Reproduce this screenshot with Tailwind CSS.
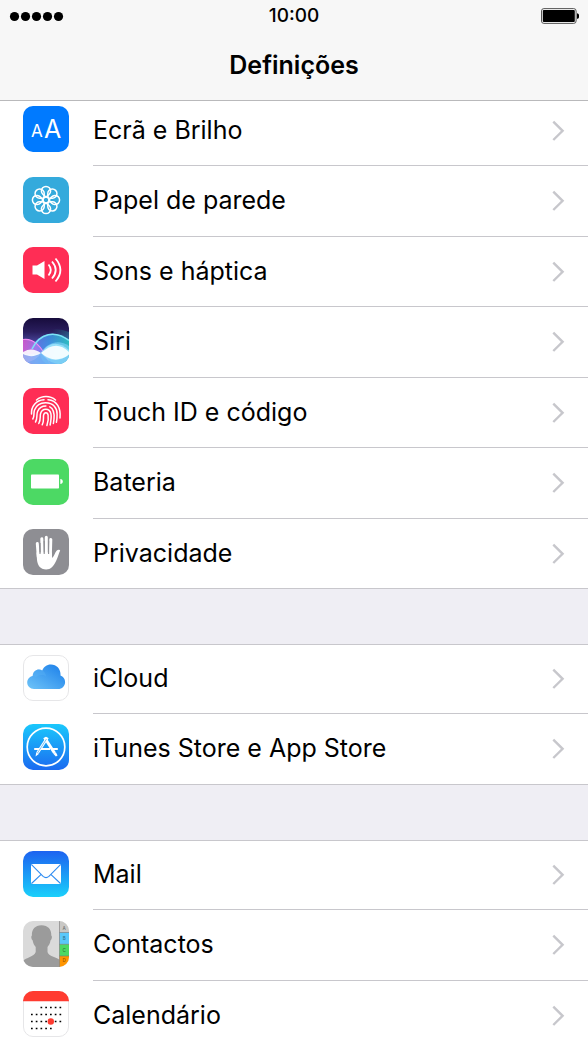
<!DOCTYPE html>
<html lang="pt">
<head>
    <meta charset="UTF-8">
    <meta name="viewport" content="width=device-width, initial-scale=1.0">
    <title>Definições</title>
    <script src="https://cdn.jsdelivr.net/npm/@tailwindcss/browser@4"></script>
</head>
<body class="h-screen overflow-hidden flex flex-col bg-[#efeef4] text-black font-['Inter','Liberation_Sans',sans-serif]">

    <svg class="hidden">
        <symbol id="chevron" viewBox="0 0 14 22">
            <path d="M2.300 1.600 11.600 10.800 2.300 20" fill="none" stroke="#c7c7cc" stroke-width="2.400"/>
        </symbol>
    </svg>

    <header class="relative z-10 shrink-0 bg-[#f7f7f7] border-b border-[#b9b9bb]">
        <div class="grid grid-cols-3 items-center h-8 px-[9px]">
            <svg class="w-[55px] h-[11px]" viewBox="0 0 55 11" role="img" aria-label="Rede">
                <circle cx="5.5" cy="5.5" r="4.6"/>
                <circle cx="16.5" cy="5.5" r="4.6"/>
                <circle cx="27.5" cy="5.5" r="4.6"/>
                <circle cx="38.5" cy="5.5" r="4.6"/>
                <circle cx="49.5" cy="5.5" r="4.6"/>
            </svg>
            <time class="text-center text-[19px] font-medium">10:00</time>
            <svg class="w-[38px] h-4 justify-self-end" viewBox="0 0 38 16" role="img" aria-label="Bateria cheia">
                <rect x=".5" y=".6" width="34.6" height="14.8" rx="2.4" fill="#f7f7f7" stroke="#555"/>
                <rect x="1.8" y="2" width="32" height="12" rx="1"/>
                <path d="M36 5.2c1.3.1 2.2 1.300 2.200 2.800s-.9 2.700-2.200 2.800z"/>
            </svg>
        </div>
        <h1 class="h-[68px] flex items-center justify-center text-[25px] font-semibold">Definições</h1>
    </header>

    <main class="flex-1 min-h-0 -mt-[5px]">
        <ul class="bg-white border-[#c8c7cc] border-b">
            <li class="h-[70px]">
                <a href="#ecra" class="flex h-full items-center pl-[23px]">
                    <svg class="size-[46px] mb-1" viewBox="0 0 46 46" aria-hidden="true">
                        <rect width="46" height="46" rx="10" fill="#007aff"/>
                        <text x="8" y="30.500" font-size="17" fill="#fff">A</text>
                        <text x="21" y="31.500" font-size="25" fill="#fff">A</text>
                    </svg>
                    <span class="flex flex-1 self-stretch items-center justify-between ml-6 pr-[23px] border-b border-[#c8c7cc] text-[25px]">Ecrã e Brilho
                        <svg class="w-3.5 h-[22px]"><use href="#chevron"/></svg>
                    </span>
                </a>
            </li>
            <li class="h-[71px]">
                <a href="#papel" class="flex h-full items-center pl-[23px]">
                    <svg class="size-[46px] mb-1" viewBox="0 0 46 46" aria-hidden="true">
                        <rect width="46" height="46" rx="10" fill="#34aadc"/>
                        <g fill="none" stroke="#fff" stroke-width="1.500">
                            <circle cx="23" cy="23" r="3"/>
                            <path d="M20 17.500a4.600 4.600 0 1 1 6 0L23 20z"/>
                            <path d="M20 17.500a4.600 4.600 0 1 1 6 0L23 20z" transform="rotate(45 23 23)"/>
                            <path d="M20 17.500a4.600 4.600 0 1 1 6 0L23 20z" transform="rotate(90 23 23)"/>
                            <path d="M20 17.500a4.600 4.600 0 1 1 6 0L23 20z" transform="rotate(135 23 23)"/>
                            <path d="M20 17.500a4.600 4.600 0 1 1 6 0L23 20z" transform="rotate(180 23 23)"/>
                            <path d="M20 17.500a4.600 4.600 0 1 1 6 0L23 20z" transform="rotate(225 23 23)"/>
                            <path d="M20 17.500a4.600 4.600 0 1 1 6 0L23 20z" transform="rotate(270 23 23)"/>
                            <path d="M20 17.500a4.600 4.600 0 1 1 6 0L23 20z" transform="rotate(315 23 23)"/>
                        </g>
                    </svg>
                    <span class="flex flex-1 self-stretch items-center justify-between ml-6 pr-[23px] border-b border-[#c8c7cc] text-[25px]">Papel de parede
                        <svg class="w-3.5 h-[22px]"><use href="#chevron"/></svg>
                    </span>
                </a>
            </li>
            <li class="h-[70px]">
                <a href="#sons" class="flex h-full items-center pl-[23px]">
                    <svg class="size-[46px] mb-1" viewBox="0 0 46 46" aria-hidden="true">
                        <rect width="46" height="46" rx="10" fill="#ff2d55"/>
                        <path d="M9.500 18.500h4.500L21.500 14v18L14 27.500H9.500z" fill="#fff"/>
                        <g fill="none" stroke="#fff" stroke-width="1.800">
                            <path d="M25.500 17.500q4.600 5.500 0 11"/>
                            <path d="M29 14.500q7.400 8.500 0 17"/>
                            <path d="M32.500 11.500q9.800 11.500 0 23"/>
                        </g>
                    </svg>
                    <span class="flex flex-1 self-stretch items-center justify-between ml-6 pr-[23px] border-b border-[#c8c7cc] text-[25px]">Sons e háptica
                        <svg class="w-3.5 h-[22px]"><use href="#chevron"/></svg>
                    </span>
                </a>
            </li>
            <li class="h-[71px]">
                <a href="#siri" class="flex h-full items-center pl-[23px]">
                    <svg class="size-[46px] mb-1" viewBox="0 0 46 46" aria-hidden="true">
                        <defs>
                            <linearGradient id="siri-sky" x1="0" y1="0" x2="0" y2="1">
                                <stop offset="0" stop-color="#170c3c"/>
                                <stop offset=".3" stop-color="#2a1e5e"/>
                                <stop offset=".55" stop-color="#4b48a0"/>
                                <stop offset="1" stop-color="#3f8fd8"/>
                            </linearGradient>
                            <linearGradient id="siri-left" x1="0" y1="0" x2="1" y2="0">
                                <stop offset="0" stop-color="#e85fd8"/>
                                <stop offset=".5" stop-color="#a97cf0"/>
                                <stop offset="1" stop-color="#4c9cf4"/>
                            </linearGradient>
                            <linearGradient id="siri-right" x1="0" y1="0" x2="1" y2="0">
                                <stop offset="0" stop-color="#7a6cf0"/>
                                <stop offset=".5" stop-color="#3f9cf0"/>
                                <stop offset="1" stop-color="#2ccfc8"/>
                            </linearGradient>
                            <linearGradient id="siri-glow" x1="0" y1="0" x2="1" y2="0">
                                <stop offset=".4" stop-color="#1fb5b0" stop-opacity="0"/>
                                <stop offset="1" stop-color="#1fb5b0" stop-opacity=".7"/>
                            </linearGradient>
                            <clipPath id="siri-clip"><rect width="46" height="46" rx="10"/></clipPath>
                        </defs>
                        <g clip-path="url(#siri-clip)">
                            <rect width="46" height="46" fill="url(#siri-sky)"/>
                            <path d="M18 15Q32 8 46 14v12H18z" fill="url(#siri-glow)" opacity=".5"/>
                            <path d="M5 34C15 14 32 11 46 22v24H5z" fill="url(#siri-right)" opacity=".8"/>
                            <path d="M0 21.500c10-1.500 18 5 27 24.500H0z" fill="url(#siri-left)" opacity=".8"/>
                            <path d="M0 21.500c10-1.500 18 5 27 24.500" fill="none" stroke="#f28cf2" stroke-width="1.200"/>
                            <path d="M9 31C17 15 32 12 46 22.500" fill="none" stroke="#7ce4f6" stroke-width="1.500"/>
                            <path d="M17 36c7-12 19-15 29-8v18H24c-4-2-6-5-7-10z" fill="#86d8fa" opacity=".6"/>
                            <path d="M0 35c6 2 12 1 18 0 6 7 16 8 28 2v9H0z" fill="#86d0fa" opacity=".65"/>
                            <path d="M18 35q12-17 28-3v5q-16 11-28-2z" fill="#a8ecff" opacity=".7"/>
                            <path d="M0 34c7-4 12-3 18 1 10-9 19-10 28-1v2.500c-9 7-19 6.500-28-1.500-6 4-12 4-18 1z" fill="#fff" opacity=".88"/>
                            <path d="M0 46c9-3 15-5 18-11 5 7 11 10 17 11z" fill="#5ba0f0" opacity=".45"/>
                        </g>
                    </svg>
                    <span class="flex flex-1 self-stretch items-center justify-between ml-6 pr-[23px] border-b border-[#c8c7cc] text-[25px]">Siri
                        <svg class="w-3.5 h-[22px]"><use href="#chevron"/></svg>
                    </span>
                </a>
            </li>
            <li class="h-[70px]">
                <a href="#touchid" class="flex h-full items-center pl-[23px]">
                    <svg class="size-[46px] mb-1" viewBox="0 0 46 46" aria-hidden="true">
                        <rect width="46" height="46" rx="10" fill="#ff2d55"/>
                        <g fill="none" stroke="#fff" stroke-width="1.500" stroke-linecap="round">
                            <path d="M13.500 12Q17.500 8.600 23 8.600T32.500 12"/>
                            <path d="M8.500 26C8 18.500 13 12 21 11.700M25 11.800C34 12.500 38 20 37 30"/>
                            <path d="M9.800 31c2-3 .5-5.500 1.700-9C13.500 17 18 14.800 22.500 14.800c8 0 11.700 5.500 11.600 11.400 0 3-.1 5.800-.7 8"/>
                            <path d="M12.500 34c2.300-3.500.6-7 2.100-10.500 1.500-3.600 4.500-5.500 8.300-5.500M26.800 18.900c4 2 4.700 6.500 4.200 12.100l-.6 4.500"/>
                            <path d="M15.800 35.500c2.300-4 .9-7 1.800-10 1.600-5.600 8.900-5.800 10.300.2.700 3.500-.1 8-.8 11.300"/>
                            <path d="M19.200 36.800c2.100-4 .9-6.800 1.400-9.600.7-3.300 4-3.200 4.500 0 .5 3.300 0 6.800-1.200 10.300"/>
                        </g>
                    </svg>
                    <span class="flex flex-1 self-stretch items-center justify-between ml-6 pr-[23px] border-b border-[#c8c7cc] text-[25px]">Touch ID e código
                        <svg class="w-3.5 h-[22px]"><use href="#chevron"/></svg>
                    </span>
                </a>
            </li>
            <li class="h-[71px]">
                <a href="#bateria" class="flex h-full items-center pl-[23px]">
                    <svg class="size-[46px] mb-1" viewBox="0 0 46 46" aria-hidden="true">
                        <rect width="46" height="46" rx="10" fill="#4cd964"/>
                        <rect x="8" y="15.500" width="28" height="14" rx=".8" fill="#fff"/>
                        <path d="M37.300 20c1.700.1 2.500 1.200 2.500 2.500s-.8 2.400-2.500 2.500z" fill="#fff"/>
                    </svg>
                    <span class="flex flex-1 self-stretch items-center justify-between ml-6 pr-[23px] border-b border-[#c8c7cc] text-[25px]">Bateria
                        <svg class="w-3.5 h-[22px]"><use href="#chevron"/></svg>
                    </span>
                </a>
            </li>
            <li class="h-[69px]">
                <a href="#privacidade" class="flex h-full items-center pl-[23px]">
                    <svg class="size-[46px] mb-1" viewBox="0 0 46 46" aria-hidden="true">
                        <rect width="46" height="46" rx="10" fill="#8e8e93"/>
                        <g fill="none" stroke="#fff" stroke-width="3" stroke-linecap="round">
                            <path d="M14.300 14.500 15.300 28M18.800 9.800l.5 16M23.300 8.300V26M27.800 10.500l-.5 17"/>
                        </g>
                        <path d="M13.500 23.500h15.400l.2 5.500c2-1.500 2.800-5.500 4.700-7.500 1.100-1.100 3.200-.8 3.400.1-1.300 2.500-2 6-4 10.200-2.700 5.800-5.400 8.700-10 8.700-6 0-8.700-4.500-9.200-9.500z" fill="#fff"/>
                        <path d="M17 14v11M21.200 12v13M25.600 12v13" stroke="#8e8e93" stroke-width="1.100"/>
                    </svg>
                    <span class="flex flex-1 self-stretch items-center justify-between ml-6 pr-[23px] text-[25px]">Privacidade
                        <svg class="w-3.5 h-[22px]"><use href="#chevron"/></svg>
                    </span>
                </a>
            </li>
        </ul>

        <ul class="mt-[55px] bg-white border-[#c8c7cc] border-y">
            <li class="h-[69px]">
                <a href="#icloud" class="flex h-full items-center pl-[23px]">
                    <svg class="size-[46px] mb-1" viewBox="0 0 46 46" aria-hidden="true">
                        <linearGradient id="cloud" x1="0" y1="1" x2="1" y2="0">
                            <stop offset="0" stop-color="#6fc4f8"/>
                            <stop offset="1" stop-color="#187de9"/>
                        </linearGradient>
                        <rect x=".5" y=".5" width="45" height="45" rx="9.500" fill="#fff" stroke="#e6e6e8"/>
                        <path d="M11 34C7 34 4.200 31 4.200 27.500c0-3.300 2.300-6 5.500-6.600.2-4 3.100-6.400 6.300-6.400 1.200 0 2.200.3 3.200.9C20.800 12 23.500 9.500 28 9.500c5.500 0 9.500 4.400 9.500 9.600v1.300c2.700.9 4.600 3.400 4.600 6.500 0 3.900-3 7.100-7 7.100z" fill="url(#cloud)"/>
                        <path d="M16 14.500c4.500 0 7 3.500 7 7-3-2-7-2-10 .8-1-.9-2.200-1.300-3.300-1.400.2-4 3.100-6.400 6.300-6.400z" fill="#5bb4f6" opacity=".35"/>
                    </svg>
                    <span class="flex flex-1 self-stretch items-center justify-between ml-6 pr-[23px] border-b border-[#c8c7cc] text-[25px]">iCloud
                        <svg class="w-3.5 h-[22px]"><use href="#chevron"/></svg>
                    </span>
                </a>
            </li>
            <li class="h-[70px]">
                <a href="#stores" class="flex h-full items-center pl-[23px]">
                    <svg class="size-[46px] mb-1" viewBox="0 0 46 46" aria-hidden="true">
                        <linearGradient id="store" x1="0" y1="0" x2="0" y2="1">
                            <stop offset="0" stop-color="#1ac8fc"/>
                            <stop offset="1" stop-color="#1b6af0"/>
                        </linearGradient>
                        <rect width="46" height="46" rx="10" fill="url(#store)"/>
                        <g fill="none" stroke="#fff">
                            <circle cx="23" cy="23" r="18.800" stroke-width="1.700"/>
                            <path d="M21.500 13.500 31.500 29" stroke-width="3"/>
                            <path d="M24.500 13.500 14.500 29" stroke-width="2.800"/>
                            <path d="M11.200 25H27M29.500 25h5.300" stroke-width="2"/>
                        </g>
                        <path d="m13.300 28.300 2.500 1.600-3.300 2.500zM30.300 29.800l2.600-1.600 1.700 3.200-1.700 1z" fill="#fff"/>
                        <path d="m23.500 15-9 14" stroke="#299aed" stroke-width=".6"/>
                    </svg>
                    <span class="flex flex-1 self-stretch items-center justify-between ml-6 pr-[23px] text-[25px]">iTunes Store e App Store
                        <svg class="w-3.5 h-[22px]"><use href="#chevron"/></svg>
                    </span>
                </a>
            </li>
        </ul>

        <ul class="mt-[55px] bg-white border-[#c8c7cc] border-t">
            <li class="h-[69px]">
                <a href="#mail" class="flex h-full items-center pl-[23px]">
                    <svg class="size-[46px] mb-1" viewBox="0 0 46 46" aria-hidden="true">
                        <linearGradient id="mail" x1="0" y1="0" x2="0" y2="1">
                            <stop offset="0" stop-color="#1d62f0"/>
                            <stop offset="1" stop-color="#1ad0fb"/>
                        </linearGradient>
                        <rect width="46" height="46" rx="10" fill="url(#mail)"/>
                        <rect x="8" y="13" width="30" height="20" rx="1.500" fill="#fff"/>
                        <path d="m8.500 13.600 11.600 11.700q2.900 2.600 5.800 0L37.500 13.600M8.500 32.500l9.700-9.200M37.500 32.500l-9.700-9.200" fill="none" stroke="#2d8bf1" stroke-width="1.100"/>
                    </svg>
                    <span class="flex flex-1 self-stretch items-center justify-between ml-6 pr-[23px] border-b border-[#c8c7cc] text-[25px]">Mail
                        <svg class="w-3.5 h-[22px]"><use href="#chevron"/></svg>
                    </span>
                </a>
            </li>
            <li class="h-[71px]">
                <a href="#contactos" class="flex h-full items-center pl-[23px]">
                    <svg class="size-[46px] mb-1" viewBox="0 0 46 46" aria-hidden="true">
                        <clipPath id="contacts-clip"><rect width="46" height="46" rx="10"/></clipPath>
                        <g clip-path="url(#contacts-clip)">
                            <rect width="46" height="46" fill="#dadada"/>
                            <path d="M18.500 4.200c6.500 0 10 4.200 9.800 10.300 1 .5.800 3.500-.8 5-.5 3.500-1.800 5-3 6.500V31c1.500 5 10 5 12 8v7H0v-6c3-3.500 11-4 12.700-9v-5c-1.200-1.500-2.500-3-3-6.500-1.600-1.500-1.800-4.500-.8-5C8.700 8.400 12 4.200 18.500 4.200z" fill="#9b9b9b"/>
                            <rect x="36.500" width="9.500" height="11.500" fill="#c9c8c5"/>
                            <rect x="36.500" y="11.500" width="9.500" height="11.800" fill="#5ac8fa"/>
                            <rect x="36.500" y="23.300" width="9.500" height="11.700" fill="#4cd964"/>
                            <rect x="36.500" y="35" width="9.500" height="11" fill="#ff9500"/>
                            <path d="M36.500 0v46M36.500 11.500H46M36.500 23.300H46M36.500 35H46" stroke="#777" stroke-width=".6"/>
                            <g font-size="4.500" font-weight="600" fill="#000" fill-opacity=".45" text-anchor="middle">
                                <text x="41.200" y="9">A</text>
                                <text x="41.200" y="19">B</text>
                                <text x="41.200" y="31">C</text>
                                <text x="41.200" y="40.500">D</text>
                            </g>
                        </g>
                    </svg>
                    <span class="flex flex-1 self-stretch items-center justify-between ml-6 pr-[23px] border-b border-[#c8c7cc] text-[25px]">Contactos
                        <svg class="w-3.5 h-[22px]"><use href="#chevron"/></svg>
                    </span>
                </a>
            </li>
            <li class="h-[70px]">
                <a href="#calendario" class="flex h-full items-center pl-[23px]">
                    <svg class="size-[46px] mb-1" viewBox="0 0 46 46" aria-hidden="true">
                        <rect x=".5" y=".5" width="45" height="45" rx="9.500" fill="#fff" stroke="#e6e6e8"/>
                        <path d="M0 10.300V10A10 10 0 0 1 10 0h26a10 10 0 0 1 10 10v.3z" fill="#ff3b30"/>
                        <path d="M17.500 16.500H39M8 23.500h31M8 30.500h31M8 37.500h21" stroke="#000" stroke-width="1.700" stroke-dasharray="1.700 3.050"/>
                        <circle cx="27.800" cy="30.500" r="3.200" fill="#ff3b30"/>
                    </svg>
                    <span class="flex flex-1 self-stretch items-center justify-between ml-6 pr-[23px] text-[25px]">Calendário
                        <svg class="w-3.5 h-[22px]"><use href="#chevron"/></svg>
                    </span>
                </a>
            </li>
        </ul>
    </main>

</body>
</html>
